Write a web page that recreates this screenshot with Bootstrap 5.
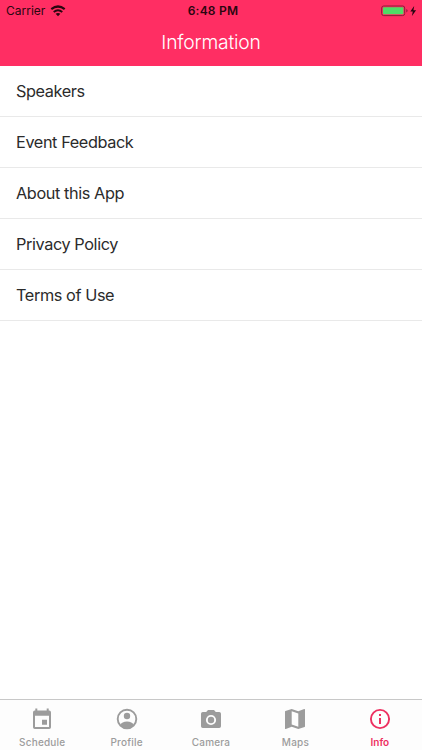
<!DOCTYPE html>
<html lang="en">
<head>
<meta charset="utf-8">
<meta name="viewport" content="width=device-width, initial-scale=1">
<title>Information</title>
<link href="https://cdn.jsdelivr.net/npm/bootstrap@5.3.0/dist/css/bootstrap.min.css" rel="stylesheet">
<style>
body{font-family:Inter,"Liberation Sans",sans-serif;background:#fff;color:#2b2b2b}
.app-head{background:#ff2e63;height:65.5px}
.status{height:22px;font-size:12px;line-height:22px;color:#2b0610;padding:0 5px 0 6px}
.status>div{flex:1 1 0}
.status .clock{letter-spacing:.22px;font-weight:600;padding-left:3px}
.app-title{font-size:19.3px;font-weight:300;line-height:41px;height:43px;color:#fff;letter-spacing:-.2px}
.menu .list-group-item,.menu .list-group-item:last-child{height:51px;padding:0 16px;border-color:#e9e9e9;border-width:0 0 1px;font-size:16.3px;line-height:50px;letter-spacing:-.41px;color:#2b2b2b}
.tabs{height:51px;border-top:1px solid #c8c8c8;background:#fdfdfd}
.tabs .nav-link{color:#9c9c9c;font-size:10px;font-weight:500;line-height:12px;padding:7px 0 0;letter-spacing:.2px}
.tabs .nav-link.active{color:#ed2f60;font-weight:600;letter-spacing:0}
.tabs svg{display:block;margin:0 auto 5px}
</style>
<script src="https://cdn.jsdelivr.net/npm/bootstrap@5.3.0/dist/js/bootstrap.bundle.min.js"></script>
</head>
<body>
<div class="d-flex flex-column vh-100 overflow-hidden">
<header class="app-head flex-shrink-0">
<div class="status d-flex align-items-center">
<div class="d-flex align-items-center"><span>Carrier</span>
<svg class="ms-1" width="17" height="12" viewBox="0 0 17 12" fill="none" stroke="#2b0610"><path d="M2.3 4.2Q9-1.2 15.7 4.2" stroke-width="2.2"/><path d="M4.7 6.9Q9 3.4 13.3 6.9" stroke-width="1.9"/><path d="M6.6 8.8Q9 7 11.4 8.8L9 11.2Z" fill="#2b0610" stroke="none"/></svg></div>
<div class="clock text-center">6:48 PM</div>
<div class="d-flex justify-content-end align-items-center">
<svg width="36" height="12" viewBox="0 0 36 12"><rect x=".7" y="1" width="23" height="9.6" rx="2" fill="#ff2e63" stroke="#8c1c3a"/><rect x="2" y="2.3" width="20.4" height="7" rx=".8" fill="#4fdc66"/><path d="M25.3 4v3.4q1.3-.5 1.3-1.7T25.3 4Z" fill="#8c1c3a"/><path d="M33.2 1 29.3 6.4h2.5L30.9 11l4.2-5.8h-2.7Z" fill="#230510"/></svg></div>
</div>
<h1 class="app-title text-center m-0">Information</h1>
</header>
<main class="flex-grow-1">
<div class="list-group list-group-flush menu">
<a class="list-group-item" href="#">Speakers</a>
<a class="list-group-item" href="#">Event Feedback</a>
<a class="list-group-item" href="#">About this App</a>
<a class="list-group-item" href="#">Privacy Policy</a>
<a class="list-group-item" href="#">Terms of Use</a>
</div>
</main>
<nav class="tabs nav nav-fill flex-nowrap flex-shrink-0">
<a class="nav-link nav-item w-100" href="#"><svg width="24" height="24" viewBox="0 0 24 24" fill="currentColor"><path fill-rule="evenodd" d="M5.3 1.6h2v2h9.4v-2h2v2h.5Q21 3.6 21 5.4v14.8Q21 22 19.2 22H4.8Q3 22 3 20.2V5.4q0-1.8 1.8-1.8h.5ZM5 8.8V20h14V8.8Zm7 3.9h5v5h-5Z"/></svg>Schedule</a>
<a class="nav-link nav-item w-100" href="#"><svg width="24" height="24" viewBox="0 0 24 24" fill="currentColor"><circle cx="12" cy="12" r="9.3" fill="none" stroke="currentColor" stroke-width="1.9"/><circle cx="12" cy="9" r="3.2"/><path d="M5.2 18Q6.8 14.4 12 14.4T18.8 18Q16.3 21 12 21T5.2 18Z"/></svg>Profile</a>
<a class="nav-link nav-item w-100" href="#"><svg width="24" height="24" viewBox="0 0 24 24" fill="currentColor"><path fill-rule="evenodd" d="M9 3 7.2 5H3.8Q2 5 2 6.8v12.4Q2 21 3.8 21h16.4Q22 21 22 19.2V6.8Q22 5 20.2 5h-3.4L15 3ZM12 7.9a5.1 5.1 0 1 1 0 10.2 5.1 5.1 0 0 1 0-10.2Z"/><circle cx="12" cy="13" r="3.2"/></svg>Camera</a>
<a class="nav-link nav-item w-100" href="#"><svg width="24" height="24" viewBox="0 0 24 24" fill="currentColor"><path fill-rule="evenodd" d="m21.4 2-.2.1L15.3 4.3 8.7 2 2.4 4.1q-.4.1-.4.6v16.7q0 .6.6.6l.2-.1 5.9-2.2L15.3 22l6.3-2.1q.4-.1.4-.6V2.6q0-.6-.6-.6ZM15.3 19.8l-6.6-2.3V4.2l6.6 2.3Z"/></svg>Maps</a>
<a class="nav-link nav-item w-100 active" href="#"><svg width="24" height="24" viewBox="0 0 24 24" fill="currentColor"><circle cx="12" cy="12" r="9.1" fill="none" stroke="currentColor" stroke-width="1.9"/><path d="M11 7h2v2h-2Zm0 4h2v6h-2Z"/></svg>Info</a>
</nav>
</div>
</body>
</html>
